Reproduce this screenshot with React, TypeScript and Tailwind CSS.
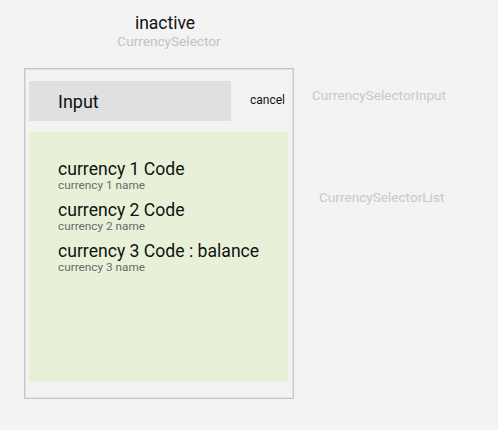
import React from "react";

const items = [
  { code: "currency 1 Code", name: "currency 1 name" },
  { code: "currency 2 Code", name: "currency 2 name" },
  { code: "currency 3 Code : balance", name: "currency 3 name" },
];

export default function App() {
  return (
    <div
      className="w-[498px] h-[430px] bg-[#f3f3f3] overflow-hidden"
      style={{ fontFamily: "Roboto, 'Liberation Sans', sans-serif" }}
    >
      <div className="w-[330px] pt-[12.5px] flex flex-col items-center">
        <div className="text-[17.5px] leading-[20.5px] text-[#111]">inactive</div>
        <div className="text-[13.6px] leading-[16px] text-[#c2c2c2] ml-[8px]">CurrencySelector</div>
      </div>
      <div className="flex mt-[19px]">
        <div className="ml-[24px] w-[270px] h-[331px] border border-[#c6c6c6] shadow-[inset_0_0_0_1px_#e2e2e2] flex flex-col">
          <div className="flex items-center mt-[12px] ml-[4px]">
            <div className="w-[202px] h-[40px] bg-[#e0e0e0] flex items-center pl-[29px] text-[18px] text-[#111]">
              Input
            </div>
            <div className="ml-[19px] text-[12px] text-[#111] mb-[2px]">cancel</div>
          </div>
          <div className="mt-[11px] ml-[4px] w-[259px] h-[250px] bg-[#e8f1d8] pt-[27px] pl-[29px] flex flex-col gap-[9px]">
            {items.map((it) => (
              <div key={it.code} className="flex flex-col">
                <div className="text-[17.6px] leading-[20px] text-[#111]">{it.code}</div>
                <div className="text-[11.8px] leading-[12px] text-[#6a6a6a]">{it.name}</div>
              </div>
            ))}
          </div>
        </div>
        <div className="flex flex-col">
          <div className="ml-[18px] mt-[19px] text-[13.6px] leading-[16px] text-[#c8c8c8]">CurrencySelectorInput</div>
          <div className="ml-[25px] mt-[86px] text-[13.6px] leading-[16px] text-[#c8c8c8]">CurrencySelectorList</div>
        </div>
      </div>
    </div>
  );
}
